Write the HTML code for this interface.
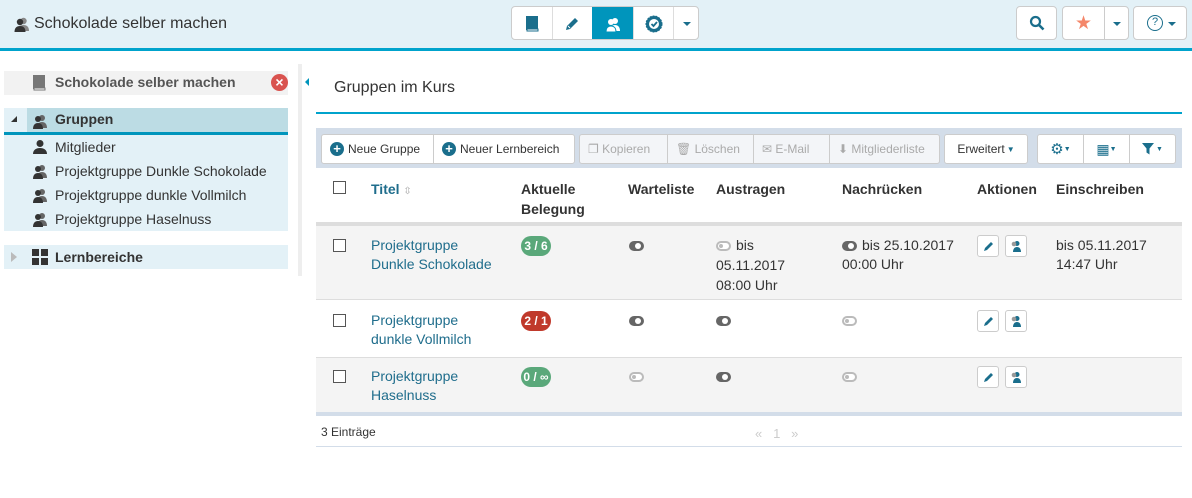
<!DOCTYPE html>
<html><head><meta charset="utf-8"><style>
*{box-sizing:border-box;margin:0;padding:0}
body{width:1192px;height:498px;overflow:hidden;background:#fff;font-family:"Liberation Sans",Arial,sans-serif;color:#333;position:relative;font-size:14px}
.a{position:absolute}
.btn{position:absolute;background:#fff;border:1px solid #ccc;display:flex;align-items:center;justify-content:center}
.tb{position:absolute;top:134px;height:30px;background:#fff;border:1px solid #ccc;font-size:12px;display:flex;align-items:center;padding:0 8px;color:#333}
.dis{color:#aaa;background:#f3f5f8}
.th{position:absolute;font-weight:bold;font-size:14px;top:179px;line-height:20px;color:#333}
.badge{position:absolute;width:30px;height:20px;border-radius:10px;color:#fff;font-size:12px;font-weight:bold;text-align:center;line-height:20px}
.tog{position:absolute;width:15px;height:10px;border-radius:5px;background:#666}
.tog::after{content:"";position:absolute;left:6px;top:2px;width:6px;height:6px;border-radius:3px;background:#fff}
.tog.off{background:#fff;border:2px solid #bbb}
.tog.off::after{left:1px;top:1px;width:4px;height:4px;background:#bbb}
.ab{position:absolute;width:22px;height:22px;border:1px solid #ccc;border-radius:3px;background:#fff}
.cb{position:absolute;width:13px;height:13px;border:1px solid #555;background:#fff}
.ct{position:absolute;font-size:14px;line-height:19px;color:#333}
.th.lnk,.ct.lnk{color:#1f6d8c}
</style></head><body>
<!-- header -->
<div class="a" style="left:0;top:0;width:1192px;height:48px;background:#e3f1f7"></div>
<div class="a" style="left:0;top:48px;width:1192px;height:3px;background:#00a3cc"></div>
<svg class="a" style="left:14px;top:16px" width="16" height="16" viewBox="0 0 16 16"><circle cx="9.5" cy="5" r="3.2" fill="#888"/><path d="M4 15c0-4 2-6 5.5-6s5.5 2 5.5 6z" fill="#888"/><circle cx="6" cy="6" r="3.2" fill="#333"/><path d="M0.5 16c0-4 2-6 5.5-6s5.5 2 5.5 6z" fill="#333"/></svg>
<div class="a" style="left:34px;top:15px;font-size:16px;color:#333">Schokolade selber machen</div>
<div class="a" style="left:511px;top:6px;width:188px;height:34px;border:1px solid #ccc;border-radius:4px;background:#fff;overflow:hidden">
 <div class="a" style="left:40px;top:0;width:1px;height:34px;background:#ddd"></div>
 <div class="a" style="left:80px;top:0;width:41px;height:34px;background:#0095bc"></div>
 <div class="a" style="left:121px;top:0;width:1px;height:34px;background:#ddd"></div>
 <div class="a" style="left:161px;top:0;width:1px;height:34px;background:#ddd"></div>
 <svg class="a" style="left:13px;top:9px" width="14" height="16" viewBox="0 0 14 16"><rect x="1" y="0" width="12" height="14" fill="#1a6e8c"/><rect x="2" y="13" width="11" height="2" fill="#fff" stroke="#1a6e8c" stroke-width="1"/></svg>
 <svg class="a" style="left:53px;top:9px" width="15" height="15" viewBox="0 0 15 15"><path d="M1 14l1-4 8-8 3 3-8 8z" fill="#1a6e8c"/><path d="M3 10l2 2" stroke="#fff"/></svg>
 <svg class="a" style="left:93px;top:9px" width="16" height="16" viewBox="0 0 16 16"><circle cx="10" cy="5" r="3" fill="#fff"/><path d="M5 15c0-4 2-6 5-6s5 2 5 6z" fill="#fff"/><circle cx="6" cy="6" r="3" fill="#fff"/><path d="M1 16c0-4 2-6 5-6s5 2 5 6z" fill="#fff" stroke="#0095bc" stroke-width="1"/></svg>
 <svg class="a" style="left:133px;top:8px" width="18" height="18" viewBox="0 0 18 18"><circle cx="9" cy="9" r="8" fill="#1a6e8c" stroke="#1a6e8c" stroke-dasharray="2 1"/><circle cx="9" cy="9" r="5" fill="#fff"/><path d="M6.5 9l2 2 3.5-4" stroke="#1a6e8c" stroke-width="1.8" fill="none"/></svg>
 <div class="a" style="left:171px;top:15px;border-left:4px solid transparent;border-right:4px solid transparent;border-top:4px solid #1a6e8c"></div>
</div>
<div class="btn" style="left:1016px;top:6px;width:41px;height:34px;border-radius:4px"><svg width="16" height="16" viewBox="0 0 16 16"><circle cx="6.5" cy="6.5" r="4.5" stroke="#1a6e8c" stroke-width="2.2" fill="none"/><path d="M10 10l4.5 4.5" stroke="#1a6e8c" stroke-width="2.6"/></svg></div>
<div class="a" style="left:1062px;top:6px;width:67px;height:34px;border:1px solid #ccc;border-radius:4px;background:#fff">
 <div class="a" style="left:41px;top:0;width:1px;height:32px;background:#ccc"></div>
 <div class="a" style="left:12px;top:5px;color:#f4876a;font-size:19px">★</div>
 <div class="a" style="left:50px;top:15px;border-left:4px solid transparent;border-right:4px solid transparent;border-top:4px solid #1a6e8c"></div>
</div>
<div class="a" style="left:1133px;top:6px;width:54px;height:34px;border:1px solid #ccc;border-radius:4px;background:#fff">
 <div class="a" style="left:13px;top:8px;width:16px;height:16px;border:1.5px solid #1a6e8c;border-radius:50%;font-size:11px;line-height:13px;text-align:center;color:#1a6e8c">?</div>
 <div class="a" style="left:34px;top:15px;border-left:4px solid transparent;border-right:4px solid transparent;border-top:4px solid #1a6e8c"></div>
</div>

<!-- sidebar -->
<div class="a" style="left:4px;top:71px;width:284px;height:24px;background:#f2f2f2"></div>
<svg class="a" style="left:33px;top:75px" width="13" height="16" viewBox="0 0 13 16"><rect x="0" y="0" width="12" height="14" fill="#777"/><rect x="1" y="13" width="11" height="2" fill="#fff" stroke="#777"/></svg>
<div class="a" style="left:55px;top:74px;font-size:14px;font-weight:bold;color:#555">Schokolade selber machen</div>
<div class="a" style="left:271px;top:74px;width:17px;height:17px;border-radius:50%;background:#d9534f;color:#fff;font-size:14px;font-weight:bold;text-align:center;line-height:17px">×</div>
<div class="a" style="left:4px;top:108px;width:284px;height:123px;background:#e3f1f7"></div>
<div class="a" style="left:27px;top:108px;width:261px;height:24px;background:#bcdce4"></div>
<div class="a" style="left:4px;top:132px;width:284px;height:3px;background:#0095bc"></div>
<div class="a" style="left:11px;top:116px;border-left:6px solid transparent;border-bottom:6px solid #333"></div>
<div class="a" style="left:55px;top:111px;font-weight:bold;font-size:14px;color:#333">Gruppen</div>
<svg class="a" style="left:32px;top:139px" width="16" height="16" viewBox="0 0 16 16"><circle cx="8" cy="4.5" r="3.5" fill="#333"/><path d="M1 15c0-4 3-6 7-6s7 2 7 6z" fill="#333"/></svg>
<div class="a" style="left:55px;top:139px">Mitglieder</div>
<div class="a" style="left:55px;top:163px">Projektgruppe Dunkle Schokolade</div>
<div class="a" style="left:55px;top:187px">Projektgruppe dunkle Vollmilch</div>
<div class="a" style="left:55px;top:211px">Projektgruppe Haselnuss</div>
<div class="a" style="left:4px;top:245px;width:284px;height:24px;background:#e3f1f7"></div>
<div class="a" style="left:11px;top:252px;width:0;height:0;border-top:5px solid transparent;border-bottom:5px solid transparent;border-left:6px solid #bbb"></div>
<div class="a" style="left:32px;top:249px;width:7px;height:7px;background:#333;box-shadow:9px 0 #333,0 9px #333,9px 9px #333"></div>
<div class="a" style="left:55px;top:249px;font-weight:bold;font-size:14px;color:#333">Lernbereiche</div>
<div class="a" style="left:298px;top:64px;width:4px;height:212px;background:#eee"></div>
<div class="a" style="left:305px;top:78px;border-top:4px solid transparent;border-bottom:4px solid transparent;border-right:4px solid #0095bc"></div>

<!-- main -->
<div class="a" style="left:334px;top:79px;font-size:16px;color:#333">Gruppen im Kurs</div>
<div class="a" style="left:316px;top:112px;width:866px;height:2px;background:#00a3cc"></div>
<div class="a" style="left:316px;top:128px;width:866px;height:40px;background:#d3dde9"></div>
<div class="tb" style="left:321px;width:113px;border-radius:3px 0 0 3px"><span style="display:inline-block;width:14px;height:14px;border-radius:50%;background:#1a6e8c;color:#fff;font-weight:bold;text-align:center;line-height:14px;font-size:13px;margin-right:4px">+</span>Neue Gruppe</div>
<div class="tb" style="left:433px;width:142px;border-radius:0 3px 3px 0"><span style="display:inline-block;width:14px;height:14px;border-radius:50%;background:#1a6e8c;color:#fff;font-weight:bold;text-align:center;line-height:14px;font-size:13px;margin-right:4px">+</span>Neuer Lernbereich</div>
<div class="tb dis" style="left:579px;width:89px;border-radius:3px 0 0 3px">❐ Kopieren</div>
<div class="tb dis" style="left:667px;width:87px">🗑 Löschen</div>
<div class="tb dis" style="left:753px;width:77px">✉ E-Mail</div>
<div class="tb dis" style="left:829px;width:111px;border-radius:0 3px 3px 0">⬇ Mitgliederliste</div>
<div class="tb" style="left:944px;width:84px;border-radius:3px;justify-content:center">Erweitert <span style="font-size:8px;margin-left:2px;color:#1a6e8c">▼</span></div>
<div class="tb" style="left:1037px;width:47px;border-radius:3px 0 0 3px;justify-content:center;color:#1a6e8c;font-size:15px">⚙<span style="font-size:7px">▼</span></div>
<div class="tb" style="left:1083px;width:47px;justify-content:center;color:#1a6e8c;font-size:14px">▦<span style="font-size:7px">▼</span></div>
<div class="tb" style="left:1129px;width:47px;border-radius:0 3px 3px 0;justify-content:center;color:#1a6e8c;font-size:14px"><svg width="12" height="12" viewBox="0 0 12 12"><path d="M0 0h12l-4.5 5.5v6l-3-2v-4z" fill="#1a6e8c"/></svg><span style="font-size:7px;margin-left:2px">▼</span></div>

<div class="cb" style="left:333px;top:181px"></div>
<div class="th lnk" style="left:371px">Titel <span style="color:#aaa;font-size:10px;font-weight:normal">⇳</span></div>
<div class="th" style="left:521px">Aktuelle<br>Belegung</div>
<div class="th" style="left:628px">Warteliste</div>
<div class="th" style="left:716px">Austragen</div>
<div class="th" style="left:842px">Nachrücken</div>
<div class="th" style="left:977px">Aktionen</div>
<div class="th" style="left:1056px">Einschreiben</div>

<div class="a" style="left:316px;top:222px;width:866px;height:4px;background:#ddd"></div>
<div class="a" style="left:316px;top:226px;width:866px;height:74px;background:#f4f4f4;border-bottom:1px solid #ddd"></div>
<div class="a" style="left:316px;top:357px;width:866px;height:55px;background:#f4f4f4;border-top:1px solid #ddd"></div>
<div class="a" style="left:316px;top:412px;width:866px;height:4px;background:#d3dde9"></div>
<div class="a" style="left:316px;top:446px;width:866px;height:1px;background:#d3dde9"></div>

<!-- row1 -->
<div class="cb" style="left:333px;top:239px"></div>
<div class="ct lnk" style="left:371px;top:236px">Projektgruppe<br>Dunkle Schokolade</div>
<div class="badge" style="left:521px;top:236px;background:#5aa87a">3 / 6</div>
<div class="tog" style="left:629px;top:241px"></div>
<div class="tog off" style="left:716px;top:241px"></div>
<div class="ct" style="left:736px;top:236px">bis</div>
<div class="ct" style="left:716px;top:255px;line-height:20px">05.11.2017<br>08:00 Uhr</div>
<div class="tog" style="left:842px;top:241px"></div>
<div class="ct" style="left:862px;top:236px">bis 25.10.2017</div>
<div class="ct" style="left:842px;top:255px">00:00 Uhr</div>
<div class="ab" style="left:977px;top:235px"></div><div class="ab" style="left:1005px;top:235px"></div>
<div class="ct" style="left:1056px;top:236px">bis 05.11.2017<br>14:47 Uhr</div>
<!-- row2 -->
<div class="cb" style="left:333px;top:314px"></div>
<div class="ct lnk" style="left:371px;top:311px">Projektgruppe<br>dunkle Vollmilch</div>
<div class="badge" style="left:521px;top:311px;background:#c0392b">2 / 1</div>
<div class="tog" style="left:629px;top:316px"></div>
<div class="tog" style="left:716px;top:316px"></div>
<div class="tog off" style="left:842px;top:316px"></div>
<div class="ab" style="left:977px;top:310px"></div><div class="ab" style="left:1005px;top:310px"></div>
<!-- row3 -->
<div class="cb" style="left:333px;top:370px"></div>
<div class="ct lnk" style="left:371px;top:367px">Projektgruppe<br>Haselnuss</div>
<div class="badge" style="left:521px;top:367px;background:#5aa87a">0 / ∞</div>
<div class="tog off" style="left:629px;top:372px"></div>
<div class="tog" style="left:716px;top:372px"></div>
<div class="tog off" style="left:842px;top:372px"></div>
<div class="ab" style="left:977px;top:366px"></div><div class="ab" style="left:1005px;top:366px"></div>

<div class="a" style="left:321px;top:425px;font-size:12px">3 Einträge</div>
<div class="a" style="left:755px;top:426px;font-size:13px;color:#ccc">«&nbsp;&nbsp;&nbsp;1&nbsp;&nbsp;&nbsp;»</div>

<!-- action icons -->
<svg class="a" style="left:983px;top:240px" width="12" height="12" viewBox="0 0 12 12"><path d="M1 11l1-3 6-6 2 2-6 6z" fill="#1a6e8c"/></svg>
<svg class="a" style="left:1010px;top:240px" width="12" height="12" viewBox="0 0 12 12"><circle cx="7" cy="3.5" r="2.5" fill="#1a6e8c"/><path d="M3 12c0-3 1.5-5 4-5s4 2 4 5z" fill="#1a6e8c"/><circle cx="4" cy="4" r="2.3" fill="#999"/></svg>
<svg class="a" style="left:983px;top:315px" width="12" height="12" viewBox="0 0 12 12"><path d="M1 11l1-3 6-6 2 2-6 6z" fill="#1a6e8c"/></svg>
<svg class="a" style="left:1010px;top:315px" width="12" height="12" viewBox="0 0 12 12"><circle cx="7" cy="3.5" r="2.5" fill="#1a6e8c"/><path d="M3 12c0-3 1.5-5 4-5s4 2 4 5z" fill="#1a6e8c"/><circle cx="4" cy="4" r="2.3" fill="#999"/></svg>
<svg class="a" style="left:983px;top:371px" width="12" height="12" viewBox="0 0 12 12"><path d="M1 11l1-3 6-6 2 2-6 6z" fill="#1a6e8c"/></svg>
<svg class="a" style="left:1010px;top:371px" width="12" height="12" viewBox="0 0 12 12"><circle cx="7" cy="3.5" r="2.5" fill="#1a6e8c"/><path d="M3 12c0-3 1.5-5 4-5s4 2 4 5z" fill="#1a6e8c"/><circle cx="4" cy="4" r="2.3" fill="#999"/></svg>
<!-- sidebar group icons -->
<svg class="a" style="left:32px;top:113px" width="16" height="16" viewBox="0 0 16 16"><circle cx="10" cy="5" r="3" fill="#666"/><path d="M5 15c0-4 2-6 5-6s5 2 5 6z" fill="#666"/><circle cx="6" cy="6" r="3" fill="#333"/><path d="M1 16c0-4 2-6 5-6s5 2 5 6z" fill="#333"/></svg>
<svg class="a" style="left:32px;top:163px" width="16" height="16" viewBox="0 0 16 16"><circle cx="10" cy="5" r="3" fill="#666"/><path d="M5 15c0-4 2-6 5-6s5 2 5 6z" fill="#666"/><circle cx="6" cy="6" r="3" fill="#333"/><path d="M1 16c0-4 2-6 5-6s5 2 5 6z" fill="#333"/></svg>
<svg class="a" style="left:32px;top:187px" width="16" height="16" viewBox="0 0 16 16"><circle cx="10" cy="5" r="3" fill="#666"/><path d="M5 15c0-4 2-6 5-6s5 2 5 6z" fill="#666"/><circle cx="6" cy="6" r="3" fill="#333"/><path d="M1 16c0-4 2-6 5-6s5 2 5 6z" fill="#333"/></svg>
<svg class="a" style="left:32px;top:211px" width="16" height="16" viewBox="0 0 16 16"><circle cx="10" cy="5" r="3" fill="#666"/><path d="M5 15c0-4 2-6 5-6s5 2 5 6z" fill="#666"/><circle cx="6" cy="6" r="3" fill="#333"/><path d="M1 16c0-4 2-6 5-6s5 2 5 6z" fill="#333"/></svg>
</body></html>
